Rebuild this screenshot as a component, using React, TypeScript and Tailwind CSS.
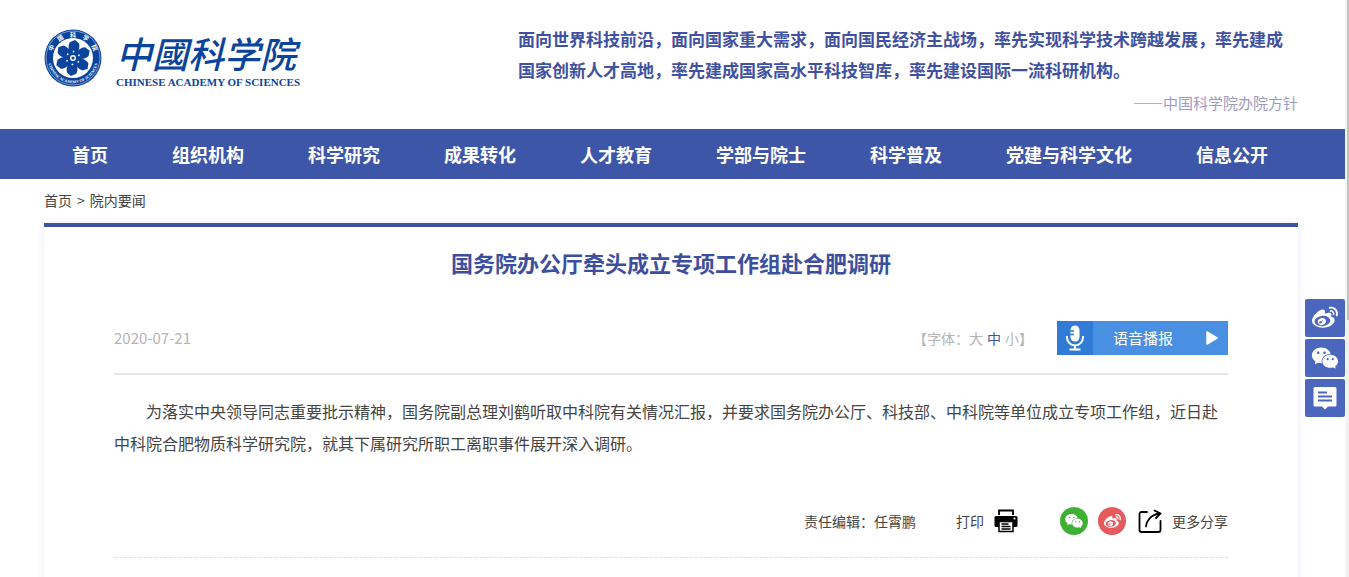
import { AiFillWechat } from "react-icons/ai";
import { FaWeibo } from "react-icons/fa";

const navItems = [
  "首页",
  "组织机构",
  "科学研究",
  "成果转化",
  "人才教育",
  "学部与院士",
  "科学普及",
  "党建与科学文化",
  "信息公开",
];

const petalAngles = [5, 65, 125, 185, 245, 305];

function Emblem() {
  return (
    <svg viewBox="0 0 58 58" className="h-[58px] w-[58px] shrink-0" aria-hidden="true">
      <defs>
        <path id="arc-top" d="M7.500 29a21.500 21.500 0 0 1 43 0" />
        <path id="arc-bottom" d="M3.800 29a25.200 25.200 0 0 0 50.400 0" />
      </defs>
      <circle cx="29" cy="29" r="28.500" fill="#0a449c" />
      <circle cx="29" cy="29" r="27" fill="none" stroke="#a9bfe0" strokeWidth="0.700" />
      <circle cx="29" cy="29" r="20" fill="#fff" />
      <g fill="#0a449c">
        {petalAngles.map((angle) => (
          <path
            key={angle}
            transform={`rotate(${angle} 29 29)`}
            d="M26.500 25C23.500 21 22.800 17.500 24.300 13.500L29.500 10.800L33.800 14C35 18 34.300 21.500 31.500 25Z"
          />
        ))}
        <circle cx="29" cy="29" r="8.500" />
      </g>
      <g fill="#fff">
        {petalAngles.map((angle) => (
          <circle key={angle} cx="29" cy="22.500" r="0.900" transform={`rotate(${angle} 29 29)`} />
        ))}
        <circle cx="29" cy="29" r="3" />
      </g>
      <circle cx="29" cy="29" r="1.500" fill="#0a449c" />
      <text
        fill="#fff"
        fontSize="6"
        fontWeight="700"
        fontFamily="'Noto Sans CJK SC', sans-serif"
        textAnchor="middle"
      >
        <textPath href="#arc-top" startOffset="50%">
          中&#8195;国&#8195;科&#8195;学&#8195;院
        </textPath>
      </text>
      <text
        fill="#fff"
        fontSize="4"
        fontWeight="700"
        fontFamily="'Liberation Serif', serif"
        textAnchor="middle"
      >
        <textPath href="#arc-bottom" startOffset="50%">
          CHINESE ACADEMY OF SCIENCES
        </textPath>
      </text>
    </svg>
  );
}

function MicIcon() {
  return (
    <svg viewBox="0 0 20 28" className="h-7 w-5" fill="none" stroke="#fff" aria-hidden="true">
      <rect x="5.500" y="1.500" width="9" height="16" rx="4.500" fill="#fff" stroke="none" />
      <path d="M5 7h4M5 10.500h4" stroke="#2f7bd6" strokeWidth="1.300" />
      <path d="M2 12v1.500a8 8 0 0 0 16 0V12" strokeWidth="2" />
      <path d="M10 21.500v4M4.500 25.500h11" strokeWidth="2" />
    </svg>
  );
}

function PrinterIcon() {
  return (
    <svg viewBox="0 0 24 24" className="h-6 w-6" aria-hidden="true">
      <path d="M5 6V1.500h14V6" fill="none" stroke="#000" strokeWidth="1.800" />
      <rect x="0.500" y="7" width="23" height="11" rx="1.500" fill="#000" />
      <circle cx="20.500" cy="9.500" r="1.100" fill="#fff" />
      <path d="M5 12.500h14v10H5z" fill="#fff" stroke="#000" strokeWidth="1.500" />
      <path d="M7.500 15h7M7.500 17.500h9M7.500 20h9" stroke="#000" strokeWidth="1.300" />
    </svg>
  );
}

function ShareIcon() {
  return (
    <svg
      viewBox="0 0 24 24"
      className="h-6 w-6"
      fill="none"
      stroke="#000"
      strokeWidth="1.800"
      strokeLinecap="round"
      aria-hidden="true"
    >
      <path d="M9 3H3.500a2 2 0 0 0-2 2v16a2 2 0 0 0 2 2h17a2 2 0 0 0 2-2V12" />
      <path d="M8 17.500C8.500 12 12.500 5.500 22 4.500M16.500 1.500L22.500 4.500L18 9" />
    </svg>
  );
}

function CommentIcon() {
  return (
    <svg viewBox="0 0 24 24" className="h-6 w-6" aria-hidden="true">
      <path
        d="M2 1h20a1.500 1.500 0 0 1 1.500 1.500V19a1.500 1.500 0 0 1-1.500 1.500h-7L12 23.500L9 20.500H2A1.500 1.500 0 0 1 0.500 19V2.500A1.500 1.500 0 0 1 2 1z"
        fill="#fff"
      />
      <path d="M5 6.500h9M5 10.500h14M5 14.500h14" stroke="#4b66bd" strokeWidth="1.900" />
    </svg>
  );
}

function Header() {
  return (
    <header className="flex justify-between pl-11 pr-[47px] pt-[23px]">
      <a href="#" className="mt-1 flex h-[62px] items-center gap-3.5 text-[#0a449c]">
        <Emblem />
        <span className="flex flex-col items-start pt-1">
          <span className="font-['Noto_Sans_CJK_TC','Noto_Sans_CJK_SC',sans-serif] text-[36px] font-medium italic leading-[44px]">
            中國科学院
          </span>
          <span className="whitespace-nowrap font-['Liberation_Serif',serif] text-[11px] font-bold leading-4">
            CHINESE ACADEMY OF SCIENCES
          </span>
        </span>
      </a>
      <div className="w-[780px]">
        <p className="text-[17px] font-bold leading-[31px] text-[#3f51a0]">
          面向世界科技前沿，面向国家重大需求，面向国民经济主战场，率先实现科学技术跨越发展，率先建成国家创新人才高地，率先建成国家高水平科技智库，率先建设国际一流科研机构。
        </p>
        <p lang="zh-CN" className="pb-3.5 pt-[5px] text-right text-[15px] leading-[25px] text-[#9c9cbe]">
          ——中国科学院办院方针
        </p>
      </div>
    </header>
  );
}

function Nav() {
  return (
    <nav className="bg-[#3e56a8] pl-11 pr-[47px]">
      <ul className="flex gap-16 px-7">
        {navItems.map((item) => (
          <li key={item}>
            <a href="#" className="block whitespace-nowrap text-lg font-bold leading-[50px] text-white">
              {item}
            </a>
          </li>
        ))}
      </ul>
    </nav>
  );
}

function ArticleMeta() {
  return (
    <div className="flex items-center justify-between border-b-2 border-[#e6e6e6] pb-[18px]">
      <time className="text-[15px] text-[#b4b4b4]">2020-07-21</time>
      <div className="flex items-center gap-6">
        <div className="flex text-sm text-[#b4b4b4]">
          <span>【字体：</span>
          <span className="flex gap-1">
            <button type="button">大</button>
            <button type="button" className="text-[#3f51a0]">
              中
            </button>
            <button type="button">小</button>
          </span>
          <span>】</span>
        </div>
        <button type="button" className="flex h-[34px] w-[171px] items-center bg-[#4a90e2] text-[15px] text-white">
          <span className="flex h-full w-9 items-center justify-center bg-[#2f7bd6]">
            <MicIcon />
          </span>
          <span className="flex-1 pl-5 text-left">语音播报</span>
          <svg viewBox="0 0 12 14" className="mr-2.5 h-3.5 w-3" aria-hidden="true">
            <path d="M1 1l10 6l-10 6z" fill="#fff" stroke="#fff" strokeWidth="1.500" strokeLinejoin="round" />
          </svg>
        </button>
      </div>
    </div>
  );
}

function ArticleFooter() {
  return (
    <div className="flex items-center justify-end border-b border-dashed border-[#dddddd] pb-[22px] text-sm text-[#444]">
      <span>责任编辑：任霄鹏</span>
      <button type="button" className="ml-10 flex items-center gap-2.5">
        打印
        <PrinterIcon />
      </button>
      <a
        href="#"
        aria-label="微信"
        className="ml-[42px] flex h-7 w-7 items-center justify-center rounded-full bg-[#3eb135] text-white"
      >
        <AiFillWechat size={20} />
      </a>
      <a
        href="#"
        aria-label="微博"
        className="ml-2.5 flex h-7 w-7 items-center justify-center rounded-full bg-[#e6595c] text-white"
      >
        <FaWeibo size={17} />
      </a>
      <a href="#" className="ml-3 flex items-center gap-2.5">
        <ShareIcon />
        更多分享
      </a>
    </div>
  );
}

function SideBar() {
  const linkClass = "flex h-[38px] w-10 items-center justify-center rounded-xs bg-[#4b66bd] text-white";
  return (
    <aside className="fixed right-1 top-[299px] flex flex-col gap-0.5">
      <a href="#" aria-label="微博" className={linkClass}>
        <FaWeibo size={26} />
      </a>
      <a href="#" aria-label="微信" className={linkClass}>
        <AiFillWechat size={30} />
      </a>
      <a href="#" aria-label="留言" className={linkClass}>
        <CommentIcon />
      </a>
    </aside>
  );
}

export default function App() {
  return (
    <div className="flex h-screen overflow-hidden bg-white font-['Noto_Sans_CJK_SC',sans-serif]">
      <div className="min-w-0 flex-1">
        <Header />
        <Nav />
        <main className="pl-11 pr-[47px]">
          <div className="flex h-11 items-center gap-[5px] pb-0.5 text-sm text-[#444]">
            <a href="#">首页</a>
            <span>&gt;</span>
            <a href="#">院内要闻</a>
          </div>
          <article className="min-h-screen border-t-4 border-[#3e53a0] px-[70px] pt-[19px] shadow-[0_0_8px_rgba(60,80,160,0.12)]">
            <h1 className="pb-[43px] text-center text-[22px] font-bold leading-8 text-[#3c4f9f]">
              国务院办公厅牵头成立专项工作组赴合肥调研
            </h1>
            <ArticleMeta />
            <p className="pb-12 pt-5 indent-8 text-base leading-8 text-[#444]">
              为落实中央领导同志重要批示精神，国务院副总理刘鹤听取中科院有关情况汇报，并要求国务院办公厅、科技部、中科院等单位成立专项工作组，近日赴中科院合肥物质科学研究院，就其下属研究所职工离职事件展开深入调研。
            </p>
            <ArticleFooter />
          </article>
        </main>
      </div>
      <div className="w-1 border-l-2 border-[#f4f4f4] bg-[#f1f1f1]">
        <div className="h-80 bg-[#c1c1c1]"></div>
      </div>
      <SideBar />
    </div>
  );
}
